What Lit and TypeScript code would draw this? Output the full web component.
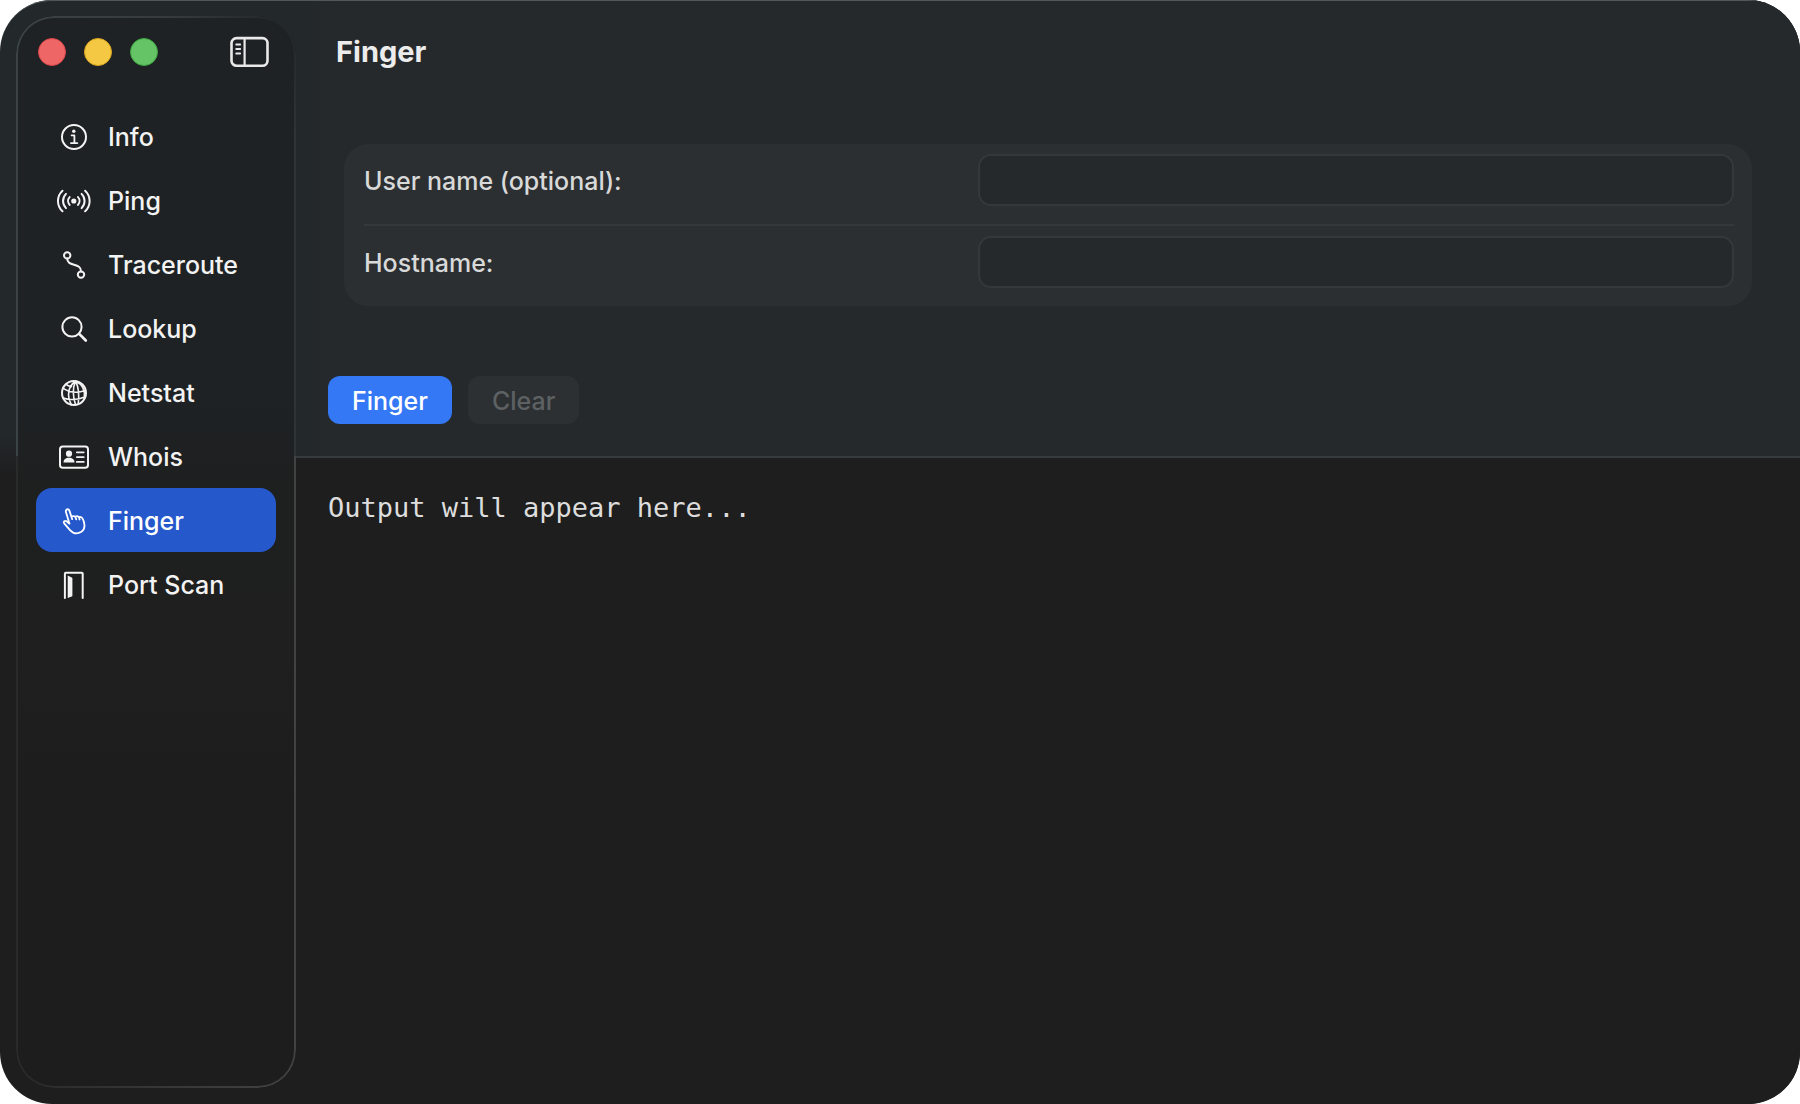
import { LitElement, html, css, svg, nothing } from "lit";
import { customElement, state } from "lit/decorators.js";

const icons = {
  info: svg`
    <circle cx="18" cy="18" r="12" stroke-width="2"/>
    <circle cx="17.8" cy="12.2" r="1.7" fill="currentColor" stroke="none"/>
    <path d="M15.6 16.4h2.8v7.4M14.9 24.1h6.4" stroke-width="1.8"/>`,
  ping: svg`
    <circle cx="17.8" cy="18" r="2.6" fill="currentColor" stroke="none"/>
    <path stroke-width="2" d="M13.600 14.100a5.800 5.800 0 0 0 0 7.800M22 14.100a5.800 5.800 0 0 1 0 7.800M10 10.900a10 10 0 0 0 0 14.200M25.600 10.900a10 10 0 0 1 0 14.200M6.500 7.700a14 14 0 0 0 0 20.600M29.100 7.700a14 14 0 0 1 0 20.600"/>`,
  traceroute: svg`
    <circle cx="11.2" cy="8.4" r="3.2" stroke-width="2"/>
    <circle cx="25" cy="27.6" r="3.2" stroke-width="2"/>
    <path stroke-width="2" d="M11.200 11.600C11 20 25.400 15.500 25 24.400"/>`,
  lookup: svg`
    <circle cx="16" cy="15.900" r="9.600" stroke-width="2"/>
    <path d="M23.200 22.900l6.600 6.600" stroke-width="2.700"/>`,
  netstat: svg`
    <circle cx="18" cy="18" r="12" stroke-width="2"/>
    <path stroke-width="1.600" d="M19.600 6.200C12 11 10.500 21 15.500 29.800M19.600 6.200C16.500 13 17 22 19.500 29.700M19.600 6.200C22.500 12 23.500 19 22.200 29M19.600 6.200C26 9 29.500 15 28.200 23.500M6.900 13.200C13 17.500 22 18 29.600 15.600M7.200 23C13 25.200 22 25 28.600 22M9.800 9.200C11.500 10.800 13.600 11.400 15.500 11.600"/>`,
  whois: svg`
    <rect x="4" y="7.400" width="28" height="21.400" rx="2.800" stroke-width="2"/>
    <circle cx="13" cy="14.700" r="3.100" fill="currentColor" stroke="none"/>
    <path d="M7.500 23.400c0-2.900 2.400-4.600 5.500-4.600s5.500 1.700 5.500 4.600z" fill="currentColor" stroke="none"/>
    <path d="M20.800 13.300h7M20.800 18.100h7M20.800 22.900h7" stroke-width="1.700"/>`,
  finger: svg`
    <path stroke-width="1.800" d="M16.200 16.200L13.500 7.900c-1-2.700-4.400-1.700-3.500 1.300l3.500 11.500L10.500 18.300c-1.500-1.200-3.500.3-2.300 2L14 27.100C17 30.400 21.400 31.300 25.400 28.800C29.800 25.900 28.800 19.800 26.800 15.800C26 14 24.700 13.500 22.900 14M15.500 13.700c1.800-1 3.500-.6 4.100.9l.6 1.700M19.400 13.500c1.700-.7 3-.2 3.600 1.100l.6 1.900"/>`,
  portscan: svg`
    <path stroke-width="2" d="M8.900 31V6.600c0-.6.300-.9.900-.9h16c.6 0 .9.300.9.900V31"/>
    <path d="M11.700 8.600l4 1.800c.5.200.7.500.7 1v17.300c0 .5-.2.700-.7.900l-4 1.300z" fill="currentColor" stroke="none"/>`,
};

type Tool = { id: keyof typeof icons; label: string };

const tools: Tool[] = [
  { id: "info", label: "Info" },
  { id: "ping", label: "Ping" },
  { id: "traceroute", label: "Traceroute" },
  { id: "lookup", label: "Lookup" },
  { id: "netstat", label: "Netstat" },
  { id: "whois", label: "Whois" },
  { id: "finger", label: "Finger" },
  { id: "portscan", label: "Port Scan" },
];

@customElement("tool-sidebar")
class ToolSidebar extends LitElement {
  @state() selected = "finger";

  static styles = css`
    :host {
      display: flex;
      flex-direction: column;
      box-sizing: border-box;
      position: relative;
      border-radius: 38px;
      padding: 16px 20px 20px;
      background: linear-gradient(#1e2224 0, #1e2224 380px, #1e1f1f 480px, #1e1f1e 640px, #1d1d1d 780px);
    }
    .edge {
      position: absolute;
      inset: 0;
      border-radius: inherit;
      padding: 2px;
      background:
        radial-gradient(circle at 100% 0, #22272a 0, #22272a00 120px),
        linear-gradient(90deg, #3c4347 0, #2e3336 100%) 0 0 / 100% 440px no-repeat,
        linear-gradient(90deg, #2a2a2a 0, #424242 100%);
      mask: linear-gradient(#000 0 0) content-box exclude, linear-gradient(#000 0 0);
      pointer-events: none;
    }
    .bar {
      display: flex;
      align-items: center;
      gap: 18px;
      height: 40px;
      padding: 0 6px 0 2px;
      margin-bottom: 32px;
    }
    button {
      border: 0;
      padding: 0;
      background: none;
      color: inherit;
      font: inherit;
    }
    .light {
      width: 28px;
      height: 28px;
      border-radius: 50%;
      border: 1px solid;
    }
    .close { background: #ee6666; border-color: #d9484a; }
    .minimize { background: #f4c843; border-color: #d9a51f; }
    .zoom { background: #65c466; border-color: #3fa63f; }
    .toggle {
      margin-left: auto;
      display: flex;
      color: #e9e9e9;
    }
    ul {
      list-style: none;
      margin: 0;
      padding: 0;
    }
    .item {
      display: flex;
      align-items: center;
      gap: 16px;
      width: 100%;
      height: 64px;
      padding: 2px 20px 0;
      border-radius: 16px;
      color: #f3f3f3;
      font-size: 25px;
      font-weight: 500;
      text-align: left;
    }
    .item.selected {
      background: #2558cb;
      color: #fff;
    }
    svg {
      display: block;
      flex: none;
      fill: none;
      stroke: currentColor;
      stroke-linecap: round;
      stroke-linejoin: round;
    }
  `;

  render() {
    return html`
      <div class="edge"></div>
      <div class="bar">
        <button class="light close" aria-label="Close"></button>
        <button class="light minimize" aria-label="Minimize"></button>
        <button class="light zoom" aria-label="Zoom"></button>
        <button class="toggle" aria-label="Toggle sidebar">
          <svg width="40" height="32" viewBox="0 0 40 32">
            <rect x="1.500" y="2.100" width="36" height="27.600" rx="5" stroke-width="2.600"/>
            <path d="M14.600 2.500v27" stroke-width="2.200"/>
            <path d="M6.200 8.500h4M6.200 13h4M6.200 17.500h4" stroke-width="1.800"/>
          </svg>
        </button>
      </div>
      <nav>
        <ul>
          ${tools.map(
            (t) => html`<li>
              <button
                class="item ${t.id === this.selected ? "selected" : ""}"
                aria-current=${t.id === this.selected ? "page" : nothing}
                @click=${() => (this.selected = t.id)}
              >
                <svg width="36" height="36" viewBox="0 0 36 36" aria-hidden="true">${icons[t.id]}</svg>
                <span>${t.label}</span>
              </button>
            </li>`
          )}
        </ul>
      </nav>
    `;
  }
}

@customElement("finger-panel")
class FingerPanel extends LitElement {
  static styles = css`
    :host {
      display: flex;
      flex-direction: column;
      min-width: 0;
      background: #1e1e1e;
    }
    .top {
      box-sizing: border-box;
      padding: 32px;
      background: linear-gradient(90deg, #23282a 0, #25292b 40px);
      border-bottom: 2px solid #363b3e;
      box-shadow: inset 0 2px 0 -1px #50575a;
    }
    h1 {
      margin: 0 8px 72px;
      color: #ececec;
      font-size: 29px;
      font-weight: 700;
      line-height: 40px;
    }
    .card {
      margin: 0 16px 70px;
      border-radius: 24px;
      background: #2c2f31;
      padding: 0 18px 0 20px;
    }
    .row {
      display: grid;
      grid-template-columns: 13fr 16fr;
      align-items: center;
      padding: 10px 0 18px;
    }
    .row + .row {
      border-top: 2px solid #34383a;
    }
    label {
      padding-top: 2px;
      color: #d8d9d9;
      font-size: 25px;
      font-weight: 500;
    }
    input {
      box-sizing: border-box;
      width: 100%;
      height: 52px;
      padding: 0 12px;
      border: 2px solid #34383a;
      border-radius: 13px;
      background: #25292b;
      color: #dcdddd;
      font: inherit;
      font-size: 25px;
      outline: none;
    }
    .actions {
      display: flex;
      gap: 16px;
    }
    .actions button {
      height: 48px;
      padding: 2px 24px 0;
      border: 0;
      border-radius: 12px;
      background: #3478f6;
      color: #fff;
      font: inherit;
      font-size: 25px;
      font-weight: 500;
    }
    .actions button:disabled {
      background: #2c3032;
      color: #5d6163;
    }
    output {
      display: block;
      padding: 32px;
      color: #dddddd;
      font: 27px/36px "DejaVu Sans Mono", monospace;
    }
  `;

  render() {
    return html`
      <form class="top" @submit=${(e: Event) => e.preventDefault()}>
        <h1>Finger</h1>
        <div class="card">
          <div class="row">
            <label for="user">User name (optional):</label>
            <input id="user" type="text" />
          </div>
          <div class="row">
            <label for="host">Hostname:</label>
            <input id="host" type="text" />
          </div>
        </div>
        <div class="actions">
          <button type="submit">Finger</button>
          <button type="button" disabled>Clear</button>
        </div>
      </form>
      <output>Output will appear here...</output>
    `;
  }
}

@customElement("app-root")
class AppRoot extends LitElement {
  static styles = css`
    :host {
      display: block;
      font-family: Inter, "Liberation Sans", sans-serif;
      background: #fff;
    }
    .window {
      display: grid;
      grid-template-columns: 280px minmax(0, 1fr);
      box-sizing: border-box;
      min-height: 100vh;
      padding-left: 16px;
      border-radius: 52px;
      overflow: hidden;
      background: linear-gradient(#23282b 0, #23282b 435px, #1e1e1e 475px);
      box-shadow: inset 0 2px 0 -1px #50575a;
    }
    tool-sidebar {
      margin: 16px 0;
    }
  `;

  render() {
    return html`
      <main class="window">
        <tool-sidebar></tool-sidebar>
        <finger-panel></finger-panel>
      </main>
    `;
  }
}
